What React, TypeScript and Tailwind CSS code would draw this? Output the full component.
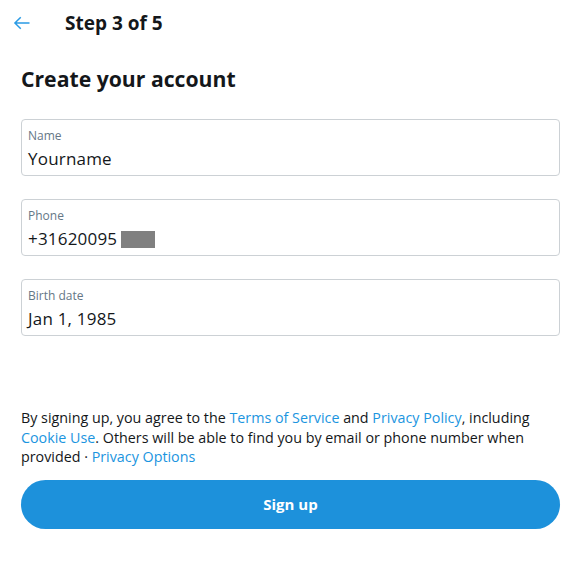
import React from "react";

const font = { fontFamily: '"Open Sans", "Noto Sans", sans-serif' };

const Field: React.FC<{ label: string; children: React.ReactNode }> = ({ label, children }) => (
  <div className="h-[57px] rounded-[4px] border border-[#ccd1d5] px-[6px] pt-[8px]">
    <div className="text-[12px] leading-[16px] text-[#657786]">{label}</div>
    <div className="mt-[3px] text-[17px] leading-[24px] tracking-[0.2px] text-[#14171a]">{children}</div>
  </div>
);

const App: React.FC = () => {
  return (
    <div className="h-[563px] w-[586px] bg-white" style={font}>
      <div className="flex h-[46px] items-center">
        <div className="ml-[12px] flex w-[53px] items-center">
          <svg width="20" height="20" viewBox="0 0 24 24" fill="none" stroke="#2a9be5" strokeWidth={1.8}>
            <path d="M21 12H3.5M10.5 5l-7 7 7 7" />
          </svg>
        </div>
        <h2 className="text-[19px] font-bold text-[#14171a]">Step 3 of 5</h2>
      </div>

      <div className="px-[21px] pr-[26px]">
        <h1 className="mt-[18px] text-[21.2px] font-bold leading-[30px] text-[#14171a]">Create your account</h1>

        <div className="mt-[25px] flex flex-col gap-[23px]">
          <Field label="Name">Yourname</Field>
          <Field label="Phone">
            <span className="flex items-center">
              +31620095
              <span className="ml-[4px] inline-block h-[17px] w-[34px] bg-[#808080]" />
            </span>
          </Field>
          <Field label="Birth date">Jan 1, 1985</Field>
        </div>

        <p className="mt-[72px] text-[14.3px] leading-[19.5px] text-[#14171a]">
          By signing up, you agree to the <span className="text-[#1b95e0]">Terms of Service</span> and{" "}
          <span className="text-[#1b95e0]">Privacy Policy</span>, including{" "}
          <span className="text-[#1b95e0]">Cookie Use</span>. Others will be able to find you by email or phone number
          when provided · <span className="text-[#1b95e0]">Privacy Options</span>
        </p>

        <button className="mt-[13px] h-[49px] w-full rounded-full bg-[#1d91db] text-[15px] font-bold text-white">
          Sign up
        </button>
      </div>
    </div>
  );
};

export default App;
